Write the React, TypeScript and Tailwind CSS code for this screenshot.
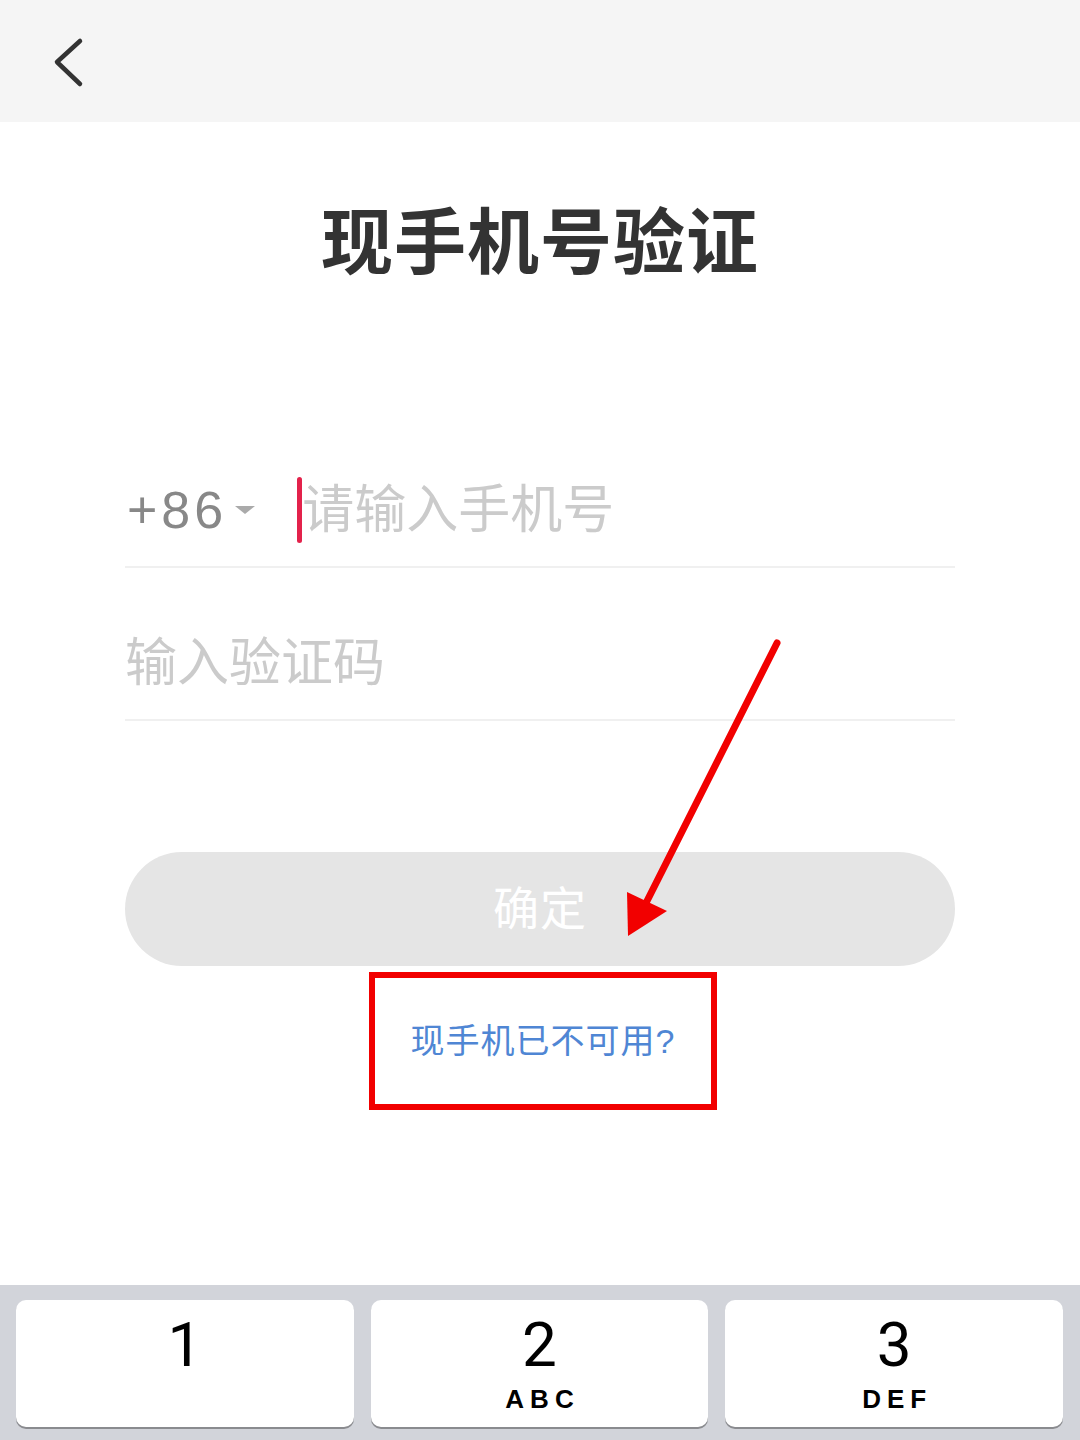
import React from 'react';

const font = 'font-["Liberation_Sans","Noto_Sans_CJK_SC",sans-serif]';

const Key: React.FC<{ num: string; letters?: string }> = ({ num, letters }) => (
  <div className="flex-1 h-[127px] bg-white rounded-[10px] shadow-[0_2px_0_#8a8b8f] flex flex-col items-center">
    <span className="mt-[10px] text-[62px] leading-[70px] text-black font-['Roboto',sans-serif] font-normal">{num}</span>
    {letters && (
      <span className="mt-[4px] text-[26px] leading-[30px] font-bold tracking-[6px] pl-[6px] text-black font-['Liberation_Sans',sans-serif]">
        {letters}
      </span>
    )}
  </div>
);

export default function App() {
  return (
    <div className={`relative w-[1080px] h-[1440px] bg-white overflow-hidden flex flex-col ${font}`}>
      {/* top bar */}
      <div className="h-[122px] bg-[#f5f5f5] flex items-center pl-[50px] shrink-0">
        <svg width="40" height="56" viewBox="0 0 40 56" fill="none">
          <path d="M30 8 L7 29 L30 51" stroke="#333" strokeWidth="4.5" strokeLinecap="round" strokeLinejoin="round" />
        </svg>
      </div>

      <h1 className="mt-[81px] text-center text-[72px] leading-[80px] font-bold text-[#333] tracking-[1px]">
        现手机号验证
      </h1>

      <div className="mt-[175px] px-[125px] flex flex-col">
        {/* phone row */}
        <div className="h-[110px] flex items-end border-b-2 border-[#f0f0f0] pb-[24px]">
          <div className="flex items-center h-[64px]">
            <span className="text-[52px] leading-[64px] text-[#888] tracking-[4px] pl-[2px] font-['Liberation_Sans',sans-serif]">+86</span>
            <span className="ml-[8px] w-0 h-0 border-l-[10px] border-r-[10px] border-t-[8px] border-l-transparent border-r-transparent border-t-[#aaa]" />
            <span className="ml-[42px] w-[5px] h-[66px] rounded-full bg-[#e3224b]" />
            <span className="text-[52px] leading-[64px] text-[#cbcbcb]">请输入手机号</span>
          </div>
        </div>
        {/* code row */}
        <div className="h-[153px] flex items-end border-b-2 border-[#f0f0f0] pb-[24px]">
          <span className="text-[52px] leading-[64px] text-[#cbcbcb]">输入验证码</span>
        </div>

        <button className="mt-[131px] h-[114px] rounded-full bg-[#e5e5e5] text-white text-[46px] tracking-[1px]">
          确定
        </button>

        <div className="mt-[6px] ml-[6px] self-center w-[348px] h-[138px] border-[6px] border-[#f20000] flex items-center justify-center">
          <span className="text-[34px] text-[#4f86d4] tracking-[1px]">现手机已不可用?</span>
        </div>
      </div>

      {/* keyboard */}
      <div className="mt-auto h-[155px] bg-[#d2d4da] flex gap-[17px] pl-[16px] pr-[17px] pt-[15px]">
        <Key num="1" />
        <Key num="2" letters="ABC" />
        <Key num="3" letters="DEF" />
      </div>

      {/* annotation arrow */}
      <svg className="absolute inset-0 pointer-events-none" width="1080" height="1440">
        <line x1="777" y1="643" x2="645" y2="905" stroke="#f20000" strokeWidth="7" strokeLinecap="round" />
        <polygon points="627,892 667,911 628,936" fill="#f20000" />
      </svg>
    </div>
  );
}
